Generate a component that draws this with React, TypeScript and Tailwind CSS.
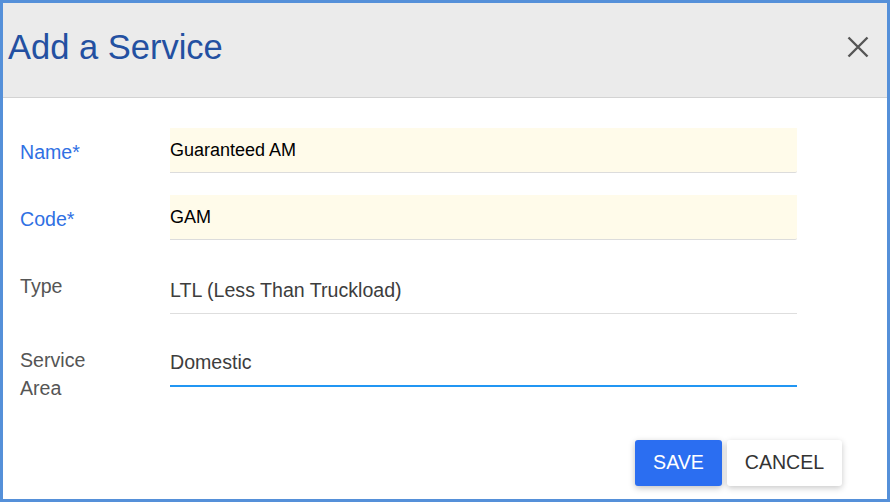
import React from "react";

const font = { fontFamily: '"Liberation Sans", Arial, sans-serif' };

export default function App() {
  return (
    <div
      className="w-[890px] h-[502px] border-[3px] border-[#5590d9] bg-white flex flex-col"
      style={font}
    >
      <div className="h-[95px] shrink-0 bg-[#ebebeb] border-b border-[#d3d3d3] flex items-start justify-between pl-[5px] pr-[16px]">
        <h1 className="mt-[24px] text-[34.5px] leading-[40px] text-[#2350a1] font-normal">
          Add a Service
        </h1>
        <button className="mt-[31px] w-[26px] h-[26px] flex items-center justify-center">
          <svg width="22" height="22" viewBox="0 0 22 22">
            <path d="M1.5 1.5 L20.5 20.5 M20.5 1.5 L1.5 20.5" stroke="#555" strokeWidth="2.4" fill="none" />
          </svg>
        </button>
      </div>

      <div className="flex-1 flex flex-col pl-[17px] pr-[90px] pt-[30px]">
        <div className="flex items-start">
          <div className="w-[150px] pt-[10px] text-[19.6px] leading-[28px] text-[#2f70e3]">Name*</div>
          <div className="flex-1 h-[45px] bg-[#fffbea] border-b border-[#dcdcdc] rounded-br-[2px] flex items-center text-[18px] text-black">
            Guaranteed AM
          </div>
        </div>

        <div className="flex items-start mt-[22px]">
          <div className="w-[150px] pt-[10px] text-[19.6px] leading-[28px] text-[#2f70e3]">Code*</div>
          <div className="flex-1 h-[45px] bg-[#fffbea] border-b border-[#dcdcdc] rounded-br-[2px] flex items-center text-[18px] text-black">
            GAM
          </div>
        </div>

        <div className="flex items-start mt-[22px]">
          <div className="w-[150px] pt-[10px] text-[19.6px] leading-[28px] text-[#555]">Type</div>
          <div className="flex-1 pt-[14px] pb-[9px] border-b border-[#dedede] text-[19.6px] leading-[28px] text-[#3d3d3d]">
            LTL (Less Than Truckload)
          </div>
        </div>

        <div className="flex items-start mt-[22px]">
          <div className="w-[150px] pt-[10px] text-[19.6px] leading-[28px] text-[#555]">
            Service
            <br />
            Area
          </div>
          <div className="flex-1 pt-[12px] pb-[9px] border-b-2 border-[#2196f3] text-[19.6px] leading-[28px] text-[#3d3d3d]">
            Domestic
          </div>
        </div>

        <div className="flex-1" />

        <div className="flex justify-end gap-[5px] mr-[-45px] mb-[13px]">
          <button className="w-[87px] h-[46px] rounded-[3px] bg-[#2b6ef1] text-white text-[19.6px] shadow-[0_2px_6px_rgba(0,0,0,0.25)]">
            SAVE
          </button>
          <button className="w-[115px] h-[46px] rounded-[3px] bg-white text-[#333] text-[19.6px] shadow-[0_2px_6px_rgba(0,0,0,0.22)]">
            CANCEL
          </button>
        </div>
      </div>
    </div>
  );
}
